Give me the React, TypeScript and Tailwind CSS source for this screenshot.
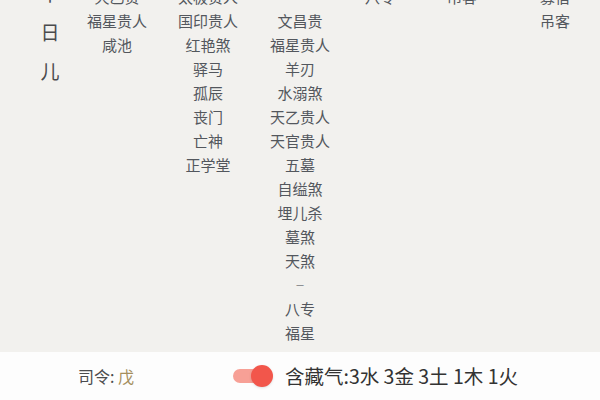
const cols: string[][] = [
  ['天乙贵', '福星贵人', '咸池'],
  ['太极贵人', '国印贵人', '红艳煞', '驿马', '孤辰', '丧门', '亡神', '正学堂'],
  ['', '文昌贵', '福星贵人', '羊刃', '水溺煞', '天乙贵人', '天官贵人', '五墓', '自缢煞', '埋儿杀', '墓煞', '天煞', '—', '八专', '福星'],
  ['八专'],
  ['吊客'],
  ['寡宿', '吊客'],
];

const font = { fontFamily: '"Noto Sans CJK SC", "Noto Sans", sans-serif' };

export default function App() {
  return (
    <div className="h-[400px] w-[600px] overflow-hidden bg-[#fdfdfd]" style={font}>
      {/* Shensha table */}
      <div className="h-[352px] overflow-hidden bg-[#f2f1ee]">
        <div className="mt-[-15px] grid grid-cols-[44px_90px_92px_92px_68px_96px_90px] pl-[28px]">
          <div className="mt-[-12px] flex flex-col items-center text-[19px] leading-[39px] text-[#4a4b4d]">
            <span>十</span>
            <span>日</span>
            <span>儿</span>
          </div>
          {cols.map((items, i) => (
            <div key={i} className="flex flex-col items-center text-[15px] leading-[24px] text-[#53575d]">
              {items.map((t, j) =>
                t === '—' ? (
                  <span key={j} className="h-[24px] whitespace-nowrap text-[9px] leading-[24px]">
                    {t}
                  </span>
                ) : (
                  <span key={j} className="h-[24px] whitespace-nowrap">
                    {t}
                  </span>
                )
              )}
            </div>
          ))}
        </div>
      </div>

      {/* Footer */}
      <div className="flex h-[48px] items-center">
        <div className="ml-[78px] w-[155px] text-[16px] text-[#4a4b4d]">
          司令: <span className="text-[#a48e5c]">戊</span>
        </div>
        <div className="relative h-[22px] w-[42px]">
          <div className="absolute left-0 top-[4px] h-[14px] w-[36px] rounded-full bg-[#f7a096]" />
          <div className="absolute left-[18px] top-0 h-[22px] w-[22px] rounded-full bg-[#f2564b] shadow-sm" />
        </div>
        <div className="ml-[10px] text-[19.5px] text-[#333]">含藏气:3水 3金 3土 1木 1火</div>
      </div>
    </div>
  );
}
